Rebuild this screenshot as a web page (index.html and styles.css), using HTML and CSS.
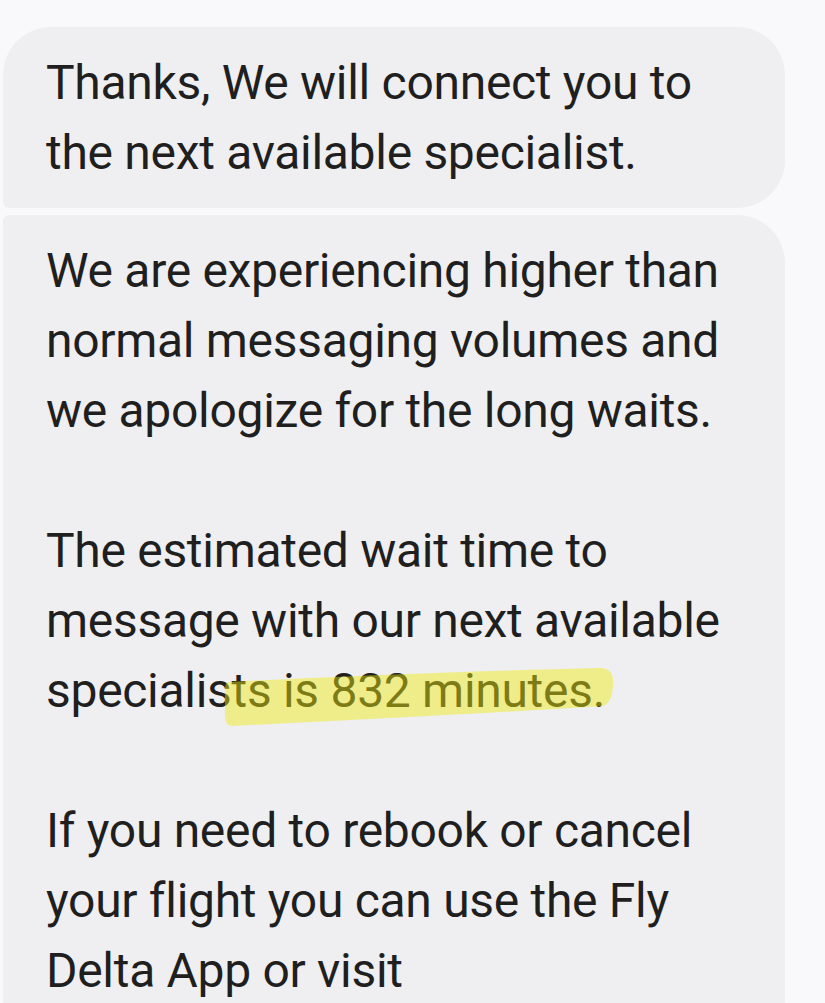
FILE: index.html
```html
<!DOCTYPE html>
<html lang="en">
<head>
  <meta charset="UTF-8" />
  <title>Messages</title>
  <link rel="stylesheet" href="styles.css">
</head>
<body>
  <div class="thread">
    <div class="bubble bubble-first">
      <p>Thanks, We will connect you to the next available specialist.</p>
    </div>
    <div class="bubble bubble-last">
      <p>We are experiencing higher than normal messaging volumes and we apologize for the long waits.</p>
      <p>The estimated wait time to message with our next available specialis<span class="marked">ts is 832 minutes.<svg class="marker" viewBox="0 0 402 66" width="396" height="66" preserveAspectRatio="none"><path d="M8,18 C100,13 250,7 385,4 Q398,4 398,18 Q398,38 388,42 C260,50 110,57 12,62 Q4,63 4,50 L4,26 Q4,18 8,18 Z"/></svg></span></p>
      <p>If you need to rebook or cancel your flight you can use the Fly Delta App or visit</p>
    </div>
  </div>
</body>
</html>
```

FILE: styles.css
```css
body {
  margin: 0;
  background: #f9f9fb;
  color: #1f1f1f;
  font-family: Roboto, 'Noto Sans', sans-serif;
  font-size: 48px;
  line-height: 70px;
  letter-spacing: -0.3px;
}

.thread {
  display: flex;
  flex-direction: column;
  gap: 7px;
  padding: 27px 40px 0 3px;
}

.bubble {
  background: #efeff1;
  padding: 21px 30px 20px 43px;
  border-radius: 48px 48px 48px 6px;
}

.bubble-last {
  border-radius: 6px 48px 48px 48px;
  padding-bottom: 40px;
}

.bubble p {
  margin: 0;
}

.bubble-last p {
  margin-bottom: 70px;
}

.bubble-last p:last-child {
  margin-bottom: 0;
}

/* hand-drawn highlighter stroke laid over the text */
.marked {
  position: relative;
}

.marker {
  position: absolute;
  left: -11px;
  top: 2px;
  pointer-events: none;
}

.marker path {
  fill: rgba(240, 235, 10, 0.45);
}
```
